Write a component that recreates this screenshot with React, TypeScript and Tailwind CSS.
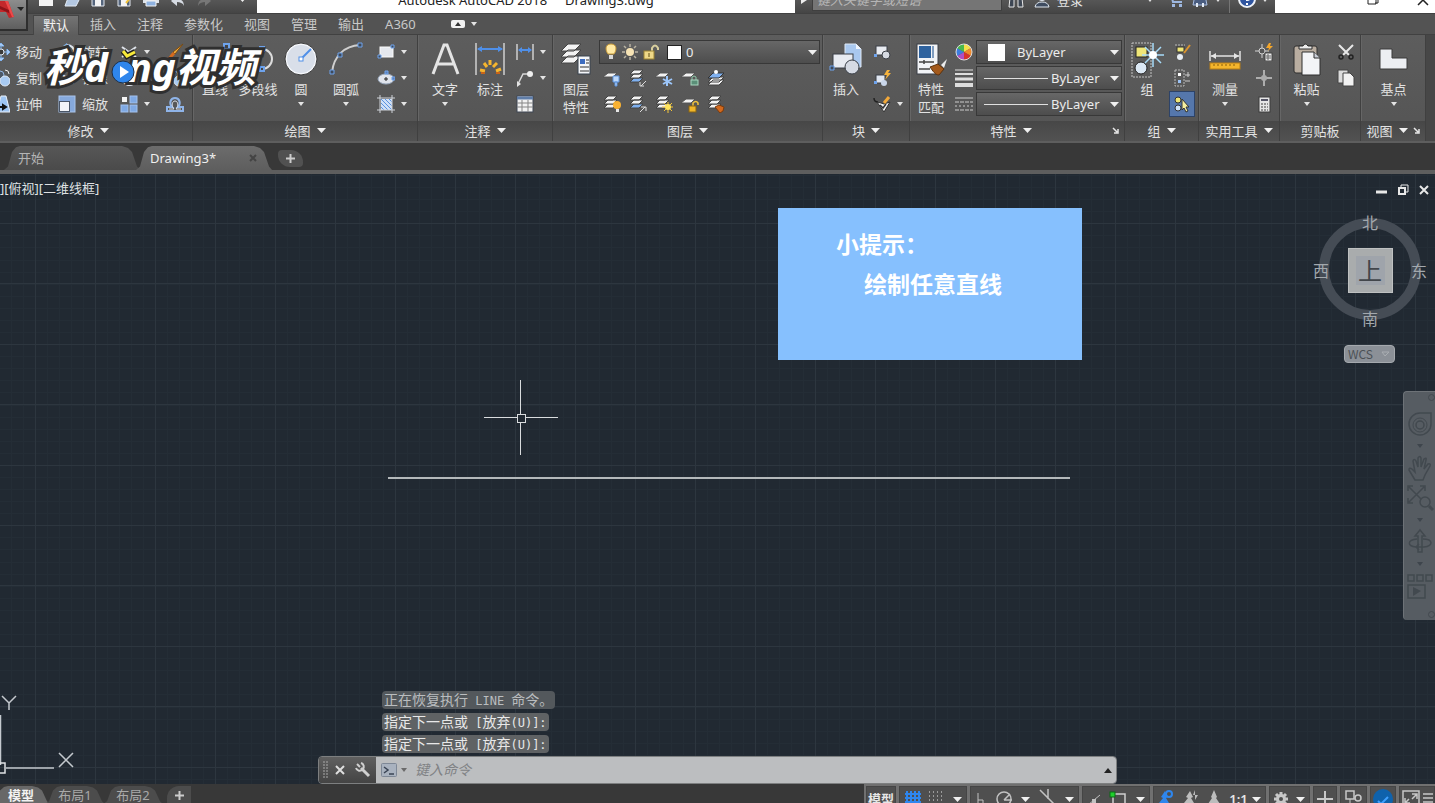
import type { ReactNode } from "react"

type IconProps = { w?: number; h?: number; children: ReactNode }

const Icon = ({ w = 18, h = 18, children }: IconProps) => (
  <svg width={w} height={h} viewBox={`0 0 ${w} ${h}`} fill="none" className="shrink-0" aria-hidden="true">
    {children}
  </svg>
)

const Caret = () => (
  <svg width="6" height="4" viewBox="0 0 6 4" className="shrink-0" aria-hidden="true">
    <path d="M0 0h6L3 4z" fill="#e4e4e4" />
  </svg>
)

const BigCaret = () => (
  <svg width="9" height="5" viewBox="0 0 9 5" className="shrink-0" aria-hidden="true">
    <path d="M0 0h9L4.500 5z" fill="#f0f0f0" />
  </svg>
)

/* ---------- icons: modify ---------- */

const MoveIcon = () => (
  <Icon>
    <path d="M9 1v16M1 9h16M9 0l-3 3h6zM9 18l-3-3h6zM0 9l3-3v6zM18 9l-3-3v6z" stroke="#7fb2ee" fill="#dfe9f6" />
    <circle cx="9" cy="9" r="3" fill="#3a3a3a" stroke="#e6edf7" />
  </Icon>
)

const CopyIcon = () => (
  <Icon>
    <circle cx="8" cy="6" r="4" fill="#4d5968" stroke="#93b6e3" />
    <circle cx="13" cy="12" r="5" fill="#a8caf2" stroke="#dfe9f6" />
    <path d="M13 1q4 0 4 4" stroke="#eee" />
  </Icon>
)

const StretchIcon = () => (
  <Icon>
    <path d="M9 1h5l4 16H5z" fill="#9dc4f2" stroke="#e8f0fa" />
    <path d="M6 12h5M11 10l3 2-3 2z" fill="#111" stroke="#111" strokeWidth="2" />
  </Icon>
)

const RotateIcon = () => (
  <Icon>
    <path d="M9 2a7 7 0 1 1-6 4" stroke="#e0e6ee" strokeWidth="2" />
    <path d="M9 0l-4 3 5 2z" fill="#7fb2ee" />
  </Icon>
)

const ScaleIcon = () => (
  <Icon>
    <rect x="1" y="1" width="16" height="16" fill="#86a9dc" stroke="#a9c4ea" />
    <rect x="1" y="6" width="11" height="11" fill="#4a5668" />
    <rect x="2" y="7" width="9" height="9" fill="#f2f4f8" />
  </Icon>
)

const TrimIcon = () => (
  <Icon>
    <path d="M2 4l14 10M16 4L2 14" stroke="#dfe3ea" strokeWidth="2" />
  </Icon>
)

const ArrayIcon = () => (
  <Icon>
    <rect x="2" y="2" width="5" height="5" fill="#f4f4f4" />
    <rect x="10" y="1" width="7" height="7" fill="#7fa9e4" stroke="#a3c2ee" />
    <rect x="1" y="10" width="7" height="7" fill="#7fa9e4" stroke="#a3c2ee" />
    <rect x="10" y="10" width="7" height="7" fill="#7fa9e4" stroke="#a3c2ee" />
  </Icon>
)

const BrushIcon = () => (
  <Icon>
    <path d="M17 1L7 9l2 2z" fill="#f5b03c" stroke="#7a4a12" />
    <path d="M7 9l2 2c-2 4-5 4-8 4 3-1 3-4 6-6z" fill="#d36a1e" />
  </Icon>
)

const OffsetIcon = () => (
  <Icon>
    <path d="M1 16h16v-4h-5c3-3 2-9-3-9s-6 6-3 9H1z" stroke="#8fb4e8" strokeWidth="2" />
    <path d="M3 14h5c-3-3-2-8 1-8s4 5 1 8h5" stroke="#d9dde4" />
  </Icon>
)

/* ---------- icons: draw ---------- */

const LineIcon = () => (
  <Icon w={34} h={34}>
    <path d="M6 29L28 5" stroke="#dcdcdc" strokeWidth="2" />
    <path d="M26 2h5v5h-5zM4 27h5v5H4z" fill="#444" stroke="#6ea3ec" strokeWidth="2" />
  </Icon>
)

const PolylineIcon = () => (
  <Icon w={34} h={34}>
    <path d="M5 27V7h16a10 10 0 0 1 0 20" stroke="#dcdcdc" strokeWidth="2" />
    <path d="M19 5h4v4h-4zM19 25h4v4h-4z" fill="#444" stroke="#6ea3ec" strokeWidth="2" />
  </Icon>
)

const CircleIcon = () => (
  <Icon w={34} h={34}>
    <circle cx="17" cy="17" r="15" fill="#d9dfe9" stroke="#f4f6fa" strokeWidth="2" />
    <circle cx="17" cy="17" r="16" stroke="#3c3c3c" />
    <path d="M17 17L27 7" stroke="#4f8fe8" strokeWidth="2" />
    <rect x="15" y="15" width="4" height="4" fill="#fff" stroke="#4f8fe8" />
  </Icon>
)

const ArcIcon = () => (
  <Icon w={34} h={34}>
    <path d="M3 30C5 14 15 4 31 3" stroke="#cfcfcf" strokeWidth="2" />
    <path d="M1 28h4v4H1zM9 11h4v4H9zM29 1h4v4h-4z" fill="#3f4a5a" stroke="#6ea3ec" />
  </Icon>
)

const RectIcon = () => (
  <Icon>
    <rect x="3" y="4" width="13" height="10" fill="#e5e8ee" stroke="#fafafa" />
    <path d="M14 2h3v3h-3zM1 12h3v3H1z" fill="#3f4a5a" stroke="#6ea3ec" />
  </Icon>
)

const EllipseIcon = () => (
  <Icon>
    <ellipse cx="9" cy="10" rx="8" ry="5" fill="#e0e4ec" stroke="#9aa9be" />
    <path d="M9 8v4M7 10h4" stroke="#222" />
    <path d="M8 2h3v3H8zM15 8h3v3h-3z" fill="#5a7fb8" stroke="#6ea3ec" />
  </Icon>
)

const HatchIcon = () => (
  <Icon>
    <rect x="4" y="4" width="11" height="11" fill="#cfe0f7" />
    <path d="M4 8l7 7M4 4l11 11M8 4l7 7M4 12l3 3M12 4l3 3" stroke="#5a92e0" />
    <path d="M3 0v18M15 0v18M0 3h18M0 15h18" stroke="#d0d4da" />
  </Icon>
)

/* ---------- icons: annotate ---------- */

const TextIcon = () => (
  <Icon w={34} h={34}>
    <path d="M5 32L16 3h3l11 29M10 22h15" stroke="#e4e4e4" strokeWidth="3" />
  </Icon>
)

const DimensionIcon = () => (
  <Icon w={34} h={34}>
    <path d="M3 1v32M31 1v32" stroke="#cfcfcf" strokeWidth="1.500" />
    <path d="M5 7h24" stroke="#4f8fe8" strokeWidth="2" />
    <path d="M4 7l5-3v6zM30 7l-5-3v6z" fill="#4f8fe8" />
    <path d="M7 28l5 1M11 21l3 4M17 18v5M24 21l-4 4M28 27l-5 2" stroke="#f5b52e" strokeWidth="3" />
    <path d="M8 31h4M23 31h4" stroke="#c8641a" strokeWidth="2" />
  </Icon>
)

const LinearDimIcon = () => (
  <Icon>
    <path d="M1 1v16M17 1v16" stroke="#cfcfcf" strokeWidth="1.500" />
    <path d="M3 7h12" stroke="#4f8fe8" strokeWidth="2" />
    <path d="M2 7l4-3v6zM16 7l-4-3v6z" fill="#4f8fe8" />
  </Icon>
)

const LeaderIcon = () => (
  <Icon>
    <path d="M2 15L7 5h5" stroke="#d8d8d8" strokeWidth="1.500" />
    <path d="M1 18l0-6 4 3z" fill="#e4e4e4" />
    <circle cx="14" cy="5" r="3" fill="#efefef" />
  </Icon>
)

const TableIcon = () => (
  <Icon>
    <rect x="1" y="1" width="16" height="16" fill="#f2f2f2" stroke="#3e4754" />
    <path d="M1 3h16" stroke="#5f7da8" strokeWidth="3" />
    <path d="M1 8h16M1 12h16M6 5v12M12 5v12" stroke="#858585" />
  </Icon>
)

/* ---------- icons: layers ---------- */

const LayerPropsIcon = () => (
  <Icon w={34} h={34}>
    <path d="M9 14h13l-7 7H2zM9 8h13l-7 7H2zM9 2h13l-7 7H2z" fill="#f3f3f3" stroke="#444" />
    <rect x="19" y="14" width="12" height="18" fill="#f4f6f9" stroke="#39424e" />
    <rect x="21" y="17" width="5" height="5" fill="#3c6cc0" />
    <path d="M27 18h3M27 21h3M21 25h9M21 29h9" stroke="#333" />
  </Icon>
)

// small layer stack with a coloured badge in the lower right corner
const StackIcon = ({ full = false, blue = false, badge }: { full?: boolean; blue?: boolean; badge: ReactNode }) => (
  <Icon>
    {full ? (
      <>
        <path d="M5 9h9l-4 4H1z" fill={blue ? "#7fb0ef" : "#f3f3f3"} stroke="#444" />
        <path d="M5 5h9l-4 4H1zM5 1h9l-4 4H1z" fill="#f3f3f3" stroke="#444" />
      </>
    ) : (
      <path d="M5 4h9l-4 4H0z" fill="#f3f3f3" stroke="#555" />
    )}
    {badge}
  </Icon>
)

const layerTools: { label: string; icon: ReactNode }[] = [
  { label: "关", icon: <StackIcon badge={<path d="M10 7h6v6h-6zM12 13h2v4h-2z" fill="#bcd8fa" stroke="#5d93dc" />} /> },
  { label: "隔离", icon: <StackIcon full blue badge={<path d="M17 12l-5 5M11 13v4h4" stroke="#ddd" />} /> },
  {
    label: "冻结",
    icon: <StackIcon badge={<path d="M12 7v10M8 10l9 5M8 15l9-5" stroke="#9cc6fa" strokeWidth="2" />} />,
  },
  {
    label: "锁定",
    icon: (
      <StackIcon
        badge={
          <>
            <path d="M11 11V8q2-2 4 0v3" stroke="#8ec7a8" />
            <rect x="10" y="11" width="7" height="5" fill="#5b8f78" stroke="#a9d7c0" />
          </>
        }
      />
    ),
  },
  {
    label: "置为当前",
    icon: (
      <Icon>
        <path d="M6 11h11l-5 5H1zM6 8h11l-5 5H1z" fill="#f3f3f3" stroke="#444" />
        <path d="M6 4h11l-5 5H1z" fill="#7fb0ef" stroke="#333" />
        <circle cx="9" cy="3" r="2" fill="#fff" />
      </Icon>
    ),
  },
  {
    label: "打开所有图层",
    icon: (
      <StackIcon
        full
        badge={
          <>
            <circle cx="14" cy="10" r="4" fill="#f9b233" />
            <path d="M13 14h3v3h-3z" fill="#e6e6e6" />
          </>
        }
      />
    ),
  },
  { label: "取消隔离", icon: <StackIcon full blue badge={<path d="M11 17l5-5M12 12h5v4" stroke="#ddd" />} /> },
  {
    label: "解冻所有图层",
    icon: (
      <StackIcon
        full
        badge={
          <>
            <path d="M13 7v11M7 12h11M9 8l8 8M17 8l-8 8" stroke="#f3c53a" />
            <circle cx="13" cy="12" r="3" fill="#ffe45c" />
          </>
        }
      />
    ),
  },
  {
    label: "解锁",
    icon: (
      <StackIcon
        badge={
          <>
            <path d="M12 11V8q3-3 5 0v2" stroke="#f2c33c" strokeWidth="1.500" />
            <rect x="8" y="11" width="7" height="6" fill="#f0b62a" stroke="#8a6412" />
          </>
        }
      />
    ),
  },
  {
    label: "图层匹配",
    icon: <StackIcon full badge={<path d="M8 12l4-2 5 2-1 4-3 2z" fill="#d2691e" stroke="#7a3b0c" />} />,
  },
]

const BulbIcon = () => (
  <Icon w={12} h={18}>
    <path d="M6 1c6 0 6 6 3 10H3C0 7 0 1 6 1z" fill="#ffe9a3" stroke="#c79a3a" />
    <rect x="4" y="12" width="4" height="4" fill="#d8d8d8" />
  </Icon>
)

const SunIcon = () => (
  <Icon>
    <path
      d="M9 1v3M9 14v3M1 9h3M14 9h3M3 3l2 2M13 13l2 2M15 3l-2 2M3 15l2-2"
      stroke="#b9b3a2"
      strokeWidth="1.500"
    />
    <circle cx="9" cy="9" r="4" fill="#f6e3b4" />
  </Icon>
)

const UnlockIcon = () => (
  <Icon w={16}>
    <path d="M9 9V5q3-5 6 0v2" stroke="#d9cf9e" strokeWidth="2" />
    <rect x="1" y="8" width="10" height="8" fill="#efd988" stroke="#9c8333" />
    <path d="M6 10v4" stroke="#5f4c12" />
  </Icon>
)

/* ---------- icons: block / properties ---------- */

const InsertIcon = () => (
  <Icon w={34} h={34}>
    <path d="M16 2h11l5 5v18H16z" fill="#a9c8ef" stroke="#dfe9f6" />
    <path d="M27 2v5h5z" fill="#eef4fc" />
    <rect x="4" y="12" width="20" height="14" fill="#e8ebf1" stroke="#3a3f47" />
    <circle cx="23" cy="25" r="7" fill="#d5dae3" stroke="#3a3f47" />
    <path d="M1 24h4v4H1z" fill="#3f4a5a" stroke="#6ea3ec" />
  </Icon>
)

const CreateBlockIcon = () => (
  <Icon>
    <rect x="3" y="3" width="11" height="9" fill="#e8ebf1" stroke="#3a3f47" />
    <circle cx="13" cy="12" r="4" fill="#d5dae3" stroke="#3a3f47" />
    <path d="M1 11h3v3H1z" fill="#6ea3ec" />
  </Icon>
)

const EditBlockIcon = () => (
  <Icon>
    <rect x="3" y="6" width="9" height="8" fill="#dfe6f1" stroke="#3a3f47" />
    <circle cx="11" cy="14" r="3" fill="#c9d6ea" />
    <path d="M1 12h3v3H1z" fill="#6ea3ec" />
    <path d="M14 1l-3 5h3l-2 5 6-7h-3l2-3z" fill="#f6b33c" />
  </Icon>
)

const AttributeIcon = () => (
  <Icon>
    <path d="M1 3q0 4 4 4" stroke="#222" strokeWidth="1.500" />
    <path d="M4 7l4 1 3 1 6-2-6 10z" fill="#eee" stroke="#333" />
    <path d="M7 10l3 3 3-4" stroke="#333" strokeWidth="1.500" />
    <path d="M16 2l-5 6" stroke="#f2a93a" strokeWidth="3" />
  </Icon>
)

const MatchPropsIcon = () => (
  <Icon w={34} h={34}>
    <rect x="3" y="2" width="21" height="30" fill="#f2f4f7" stroke="#3a3f47" />
    <rect x="5" y="4" width="12" height="12" fill="#2f639f" />
    <path d="M19 4v12" stroke="#7f9cbf" strokeWidth="2" />
    <path d="M5 20h15M10 18v4M5 27h11" stroke="#444" strokeWidth="1.500" />
    <path d="M33 17l-6 6 3 3z" fill="#ececec" />
    <path d="M16 25l8-3 6 5-5 6c-4 0-6-4-9-8z" fill="#a35a1c" stroke="#5d320c" />
  </Icon>
)

const ColorWheelIcon = () => (
  <Icon>
    <path d="M9 9V1a8 8 0 0 1 7 4z" fill="#f4e04a" />
    <path d="M9 9l7-4a8 8 0 0 1 0 8z" fill="#f08a2c" />
    <path d="M9 9l7 4a8 8 0 0 1-7 4z" fill="#d8332c" />
    <path d="M9 9v8a8 8 0 0 1-7-4z" fill="#b04fc4" />
    <path d="M9 9l-7 4a8 8 0 0 1 0-8z" fill="#3c7de0" />
    <path d="M9 9L2 5a8 8 0 0 1 7-4z" fill="#49b84c" />
    <circle cx="9" cy="9" r="8" stroke="#ddd" />
  </Icon>
)

const LineWeightIcon = () => (
  <Icon>
    <path d="M0 1h18" stroke="#ddd" />
    <path d="M0 5h18" stroke="#ddd" strokeWidth="2" />
    <path d="M0 10h18" stroke="#ddd" strokeWidth="3" />
    <path d="M0 16h18" stroke="#ddd" strokeWidth="4" />
  </Icon>
)

const LineTypeIcon = () => (
  <Icon>
    <path d="M0 3h18" stroke="#ccc" />
    <path d="M0 7h18M0 15h18" stroke="#ccc" strokeDasharray="4 1" />
    <path d="M0 11h18" stroke="#ccc" strokeDasharray="2 2" />
  </Icon>
)

/* ---------- icons: group / utilities / clipboard / view ---------- */

const GroupIcon = () => (
  <Icon w={36} h={36}>
    <rect x="3" y="1" width="19" height="34" stroke="#c4c4c4" strokeDasharray="2 1" />
    <rect x="7" y="5" width="11" height="10" fill="#efe678" stroke="#222" />
    <circle cx="12" cy="26" r="6" fill="#dbe8f4" stroke="#222" />
    <path d="M24 1v24M13 13h22M16 5l16 16M32 5L16 21" stroke="#a7dcfa" strokeWidth="1.500" />
    <circle cx="24" cy="13" r="4" fill="#fff" />
  </Icon>
)

const UngroupIcon = () => (
  <Icon>
    <path d="M2 2h10" stroke="#bbb" strokeDasharray="2 1" />
    <rect x="4" y="4" width="7" height="5" fill="#efe678" stroke="#333" />
    <circle cx="7" cy="14" r="3" fill="#e8eef5" />
    <path d="M17 2l-6 8" stroke="#d9922f" strokeWidth="2" />
  </Icon>
)

const GroupEditIcon = () => (
  <Icon>
    <rect x="2" y="1" width="9" height="16" stroke="#bbb" strokeDasharray="2 1" />
    <rect x="5" y="4" width="3" height="3" fill="#fff" />
    <rect x="5" y="11" width="3" height="3" fill="#9cc2f5" />
    <path d="M12 6h5M15 3v5M12 12h5" stroke="#ccc" />
  </Icon>
)

const GroupSelectIcon = () => (
  <Icon>
    <circle cx="5" cy="5" r="3" fill="#efe678" stroke="#333" />
    <circle cx="5" cy="13" r="3" fill="#cfe1f8" stroke="#333" />
    <path d="M9 4l7 8h-3l2 4-2 1-2-4-2 2z" fill="#f6efa0" stroke="#333" />
  </Icon>
)

const MeasureIcon = () => (
  <Icon w={34} h={34}>
    <path d="M2 9v10M32 9v10M3 14h28" stroke="#e4e4e4" strokeWidth="1.500" />
    <path d="M3 14l5-3v6zM31 14l-5-3v6z" fill="#e4e4e4" />
    <rect x="2" y="21" width="30" height="6" fill="#f4b52c" stroke="#b97f14" />
    <path d="M6 22v2M10 22v2M14 22v2M18 22v2M22 22v2M26 22v2" stroke="#8a5e0a" />
  </Icon>
)

const QuickSelectIcon = () => (
  <Icon>
    <path d="M7 1v14M0 8h14" stroke="#d4d4d4" />
    <circle cx="7" cy="8" r="3" fill="#555" stroke="#d4d4d4" />
    <path d="M14 0l-3 5h3l-1 3 5-5h-3l1-3z" fill="#f4a62a" />
    <rect x="10" y="10" width="7" height="8" fill="#eee" stroke="#444" />
    <path d="M11 13h5M11 15h5M13 11v6" stroke="#666" />
  </Icon>
)

const PointIcon = () => (
  <Icon>
    <path d="M9 1v16M1 9h16" stroke="#c9c9c9" strokeWidth="1.500" />
    <circle cx="9" cy="9" r="3" fill="#aaa" />
  </Icon>
)

const CalculatorIcon = () => (
  <Icon>
    <rect x="4" y="2" width="11" height="15" fill="#e6e6e6" stroke="#3d3d3d" />
    <path d="M6 5h7" stroke="#556" strokeWidth="2" />
    <path d="M6 9h7M6 12h7M6 15h7" stroke="#777" strokeDasharray="2 1" strokeWidth="1.500" />
  </Icon>
)

const PasteIcon = () => (
  <Icon w={34} h={34}>
    <rect x="4" y="4" width="23" height="27" rx="2" fill="#b9ada0" stroke="#2f2f2f" />
    <path d="M9 7V4h4q2-4 5 0h4v3z" fill="#ececec" stroke="#2f2f2f" />
    <path d="M12 10h12l6 6v17H12z" fill="#f3f4f7" stroke="#2f2f2f" />
    <path d="M24 10v6h6" fill="#c9cdd6" stroke="#2f2f2f" />
  </Icon>
)

const CutIcon = () => (
  <Icon>
    <path d="M2 2l10 10M16 2L6 12" stroke="#e8e8e8" strokeWidth="2" />
    <circle cx="4" cy="14" r="2" stroke="#222" strokeWidth="1.500" />
    <circle cx="14" cy="14" r="2" stroke="#222" strokeWidth="1.500" />
  </Icon>
)

const CopyClipIcon = () => (
  <Icon>
    <path d="M1 1h10v13H1z" fill="#dcdcdc" stroke="#444" />
    <path d="M6 4h7l4 4v9H6z" fill="#f2f2f2" stroke="#444" />
  </Icon>
)

const BaseViewIcon = () => (
  <Icon w={34} h={34}>
    <path d="M3 7h12v9h15v11H3z" fill="#eceef2" stroke="#3a3a3a" />
  </Icon>
)

/* ---------- ribbon parts ---------- */

type BigButtonProps = { icon: ReactNode; label: string; label2?: string; menu?: boolean; width: string }

const BigButton = ({ icon, label, label2, menu, width }: BigButtonProps) => (
  <button className={`${width} shrink-0 flex flex-col items-center pt-[3px] whitespace-nowrap`}>
    <span className="h-[38px] flex items-start">{icon}</span>
    <span className="leading-[18px]">{label}</span>
    {label2 && <span className="leading-[18px]">{label2}</span>}
    {menu && (
      <span className="pt-1">
        <Caret />
      </span>
    )}
  </button>
)

type SmallButtonProps = { icon: ReactNode; title: string; text?: string; menu?: boolean; active?: boolean }

const SmallButton = ({ icon, title, text, menu, active }: SmallButtonProps) => (
  <button
    title={title}
    className={`h-[26px] px-1 flex items-center gap-[6px] whitespace-nowrap ${
      active ? "bg-[#5577ac] shadow-[inset_0_0_0_1px_#2d4368]" : ""
    }`}
  >
    {icon}
    {text && <span>{text}</span>}
    {menu && <Caret />}
  </button>
)

const Launcher = ({ label }: { label: string }) => (
  <button aria-label={label} className="w-[12px] flex items-center">
    <Icon w={7} h={7}>
      <path d="M1 1l4 4M6 2v4H2" stroke="#e8e8e8" strokeWidth="1.500" />
    </Icon>
  </button>
)

type PanelProps = {
  title: string
  width: string
  menu?: boolean
  launcher?: boolean
  titleClass?: string
  children: ReactNode
}

const Panel = ({ title, width, menu = true, launcher, titleClass = "", children }: PanelProps) => (
  <section className={`${width} shrink-0 flex flex-col border-r border-[#404040] shadow-[1px_0_0_#666]`}>
    <div className="h-[86px] pt-1 flex">{children}</div>
    <div className="h-[20px] pb-px flex bg-linear-to-b from-[#474747] to-[#525252]">
      <button className={`flex-1 flex items-center justify-center gap-[6px] whitespace-nowrap ${titleClass}`}>
        {title}
        {menu && <BigCaret />}
      </button>
      {launcher && <Launcher label={`${title}设置`} />}
    </div>
  </section>
)

const Column = ({ children, className = "" }: { children: ReactNode; className?: string }) => (
  <div className={`shrink-0 flex flex-col ${className}`}>{children}</div>
)

const SelectArrow = () => (
  <span className="absolute inset-y-0 right-[3px] flex items-center pointer-events-none">
    <BigCaret />
  </span>
)

const selectClass =
  "w-full h-[24px] appearance-none bg-linear-to-b from-[#676767] to-[#4d4d4d] border border-[#383838] text-[13px] text-[#ececec]"

const Ribbon = () => (
  <div className="h-[106px] shrink-0 flex bg-linear-to-b from-[#5d5d5d] to-[#545454]">
    <Panel title="修改" width="w-[193px]" titleClass="pr-4">
      <Column className="-ml-3">
        <SmallButton icon={<MoveIcon />} title="移动" text="移动" />
        <SmallButton icon={<CopyIcon />} title="复制" text="复制" />
        <SmallButton icon={<StretchIcon />} title="拉伸" text="拉伸" />
      </Column>
      <Column className="ml-2">
        <SmallButton icon={<RotateIcon />} title="旋转" text="旋转" />
        <SmallButton icon={<TrimIcon />} title="镜像" text="镜像" />
        <SmallButton icon={<ScaleIcon />} title="缩放" text="缩放" />
      </Column>
      <Column className="ml-1">
        <SmallButton icon={<TrimIcon />} title="修剪" menu />
        <SmallButton icon={<RotateIcon />} title="圆角" menu />
        <SmallButton icon={<ArrayIcon />} title="阵列" menu />
      </Column>
      <Column className="ml-2">
        <SmallButton icon={<BrushIcon />} title="删除" />
        <SmallButton icon={<CopyIcon />} title="分解" />
        <SmallButton icon={<OffsetIcon />} title="偏移" />
      </Column>
    </Panel>

    <Panel title="绘图" width="w-[225px]">
      <BigButton icon={<LineIcon />} label="直线" width="w-[44px]" />
      <BigButton icon={<PolylineIcon />} label="多段线" width="w-[42px]" />
      <BigButton icon={<CircleIcon />} label="圆" menu width="w-[44px]" />
      <BigButton icon={<ArcIcon />} label="圆弧" menu width="w-[46px]" />
      <Column className="ml-1">
        <SmallButton icon={<RectIcon />} title="矩形" menu />
        <SmallButton icon={<EllipseIcon />} title="椭圆" menu />
        <SmallButton icon={<HatchIcon />} title="图案填充" menu />
      </Column>
    </Panel>

    <Panel title="注释" width="w-[135px]">
      <BigButton icon={<TextIcon />} label="文字" menu width="w-[54px]" />
      <BigButton icon={<DimensionIcon />} label="标注" width="w-[36px]" />
      <Column className="ml-1">
        <SmallButton icon={<LinearDimIcon />} title="线性" menu />
        <SmallButton icon={<LeaderIcon />} title="引线" menu />
        <SmallButton icon={<TableIcon />} title="表格" />
      </Column>
    </Panel>

    <Panel title="图层" width="w-[270px]">
      <BigButton icon={<LayerPropsIcon />} label="图层" label2="特性" width="w-[46px]" />
      <div className="flex-1 pr-[2px]">
        <div className="relative h-[26px] flex items-center">
          <select aria-label="图层" className={`${selectClass} pl-[86px]`}>
            <option>0</option>
          </select>
          <span className="absolute inset-y-0 left-[6px] flex items-center gap-1 pointer-events-none">
            <BulbIcon />
            <SunIcon />
            <UnlockIcon />
            <span className="ml-1 w-[15px] h-[15px] bg-white border border-[#222]" />
          </span>
          <SelectArrow />
        </div>
        <div className="w-[130px] grid grid-cols-5">
          {layerTools.map((tool) => (
            <SmallButton key={tool.label} icon={tool.icon} title={tool.label} />
          ))}
        </div>
      </div>
    </Panel>

    <Panel title="块" width="w-[87px]">
      <BigButton icon={<InsertIcon />} label="插入" width="w-[46px]" />
      <Column>
        <SmallButton icon={<CreateBlockIcon />} title="创建块" />
        <SmallButton icon={<EditBlockIcon />} title="编辑块" />
        <SmallButton icon={<AttributeIcon />} title="编辑属性" menu />
      </Column>
    </Panel>

    <Panel title="特性" width="w-[215px]" launcher>
      <BigButton icon={<MatchPropsIcon />} label="特性" label2="匹配" width="w-[42px]" />
      <Column className="w-[24px] items-center">
        <SmallButton icon={<ColorWheelIcon />} title="颜色" />
        <SmallButton icon={<LineWeightIcon />} title="线宽" />
        <SmallButton icon={<LineTypeIcon />} title="线型" />
      </Column>
      <div className="flex-1 pr-[2px]">
        <div className="relative h-[26px] flex items-center">
          <select aria-label="对象颜色" className={`${selectClass} pl-[40px]`}>
            <option>ByLayer</option>
          </select>
          <span className="absolute left-3 w-[17px] h-[17px] bg-white pointer-events-none" />
          <SelectArrow />
        </div>
        {["线宽", "线型"].map((name) => (
          <div key={name} className="relative h-[26px] flex items-center">
            <select aria-label={`${name}选择`} className={`${selectClass} pl-[74px]`}>
              <option>ByLayer</option>
            </select>
            <span className="absolute left-2 w-[64px] h-px bg-[#e0e0e0] pointer-events-none" />
            <SelectArrow />
          </div>
        ))}
      </div>
    </Panel>

    <Panel title="组" width="w-[74px]">
      <BigButton icon={<GroupIcon />} label="组" width="w-[44px]" />
      <Column>
        <SmallButton icon={<UngroupIcon />} title="解除编组" />
        <SmallButton icon={<GroupEditIcon />} title="组编辑" />
        <SmallButton icon={<GroupSelectIcon />} title="启用组选择" active />
      </Column>
    </Panel>

    <Panel title="实用工具" width="w-[81px]">
      <BigButton icon={<MeasureIcon />} label="测量" menu width="w-[52px]" />
      <Column>
        <SmallButton icon={<QuickSelectIcon />} title="快速选择" />
        <SmallButton icon={<PointIcon />} title="点坐标" />
        <SmallButton icon={<CalculatorIcon />} title="计算器" />
      </Column>
    </Panel>

    <Panel title="剪贴板" width="w-[81px]" menu={false}>
      <BigButton icon={<PasteIcon />} label="粘贴" menu width="w-[53px]" />
      <Column>
        <SmallButton icon={<CutIcon />} title="剪切" />
        <SmallButton icon={<CopyClipIcon />} title="复制剪裁" />
      </Column>
    </Panel>

    <Panel title="视图" width="w-[65px]" launcher>
      <BigButton icon={<BaseViewIcon />} label="基点" menu width="w-[65px]" />
    </Panel>
    <div className="flex-1 bg-[#474747]" />
  </div>
)

/* ---------- title bar ---------- */

const TitleBar = () => (
  <header className="h-[13px] shrink-0 overflow-hidden flex items-end bg-white text-[13px] whitespace-nowrap">
    <div className="w-[257px] h-[27px] shrink-0 pl-[38px] flex items-center gap-[10px] bg-linear-to-b from-[#6a6a6a] to-[#454545]">
      <Icon w={16} h={16}>
        <rect x="1" y="0" width="14" height="14" fill="#f4f4f4" />
      </Icon>
      <Icon w={16} h={16}>
        <path d="M1 14L4 6h12l-4 8z" fill="#b4c8e2" stroke="#e3ebf5" />
      </Icon>
      <Icon w={16} h={16}>
        <path d="M2 1h12v13H2z" fill="#55657c" stroke="#e3e8ef" />
        <rect x="5" y="8" width="6" height="6" fill="#f4f4f4" />
      </Icon>
      <Icon w={16} h={16}>
        <path d="M2 1h12v13H2z" fill="#55657c" stroke="#e3e8ef" />
        <path d="M5 8h6v6H5z" fill="#f4f4f4" />
        <path d="M15 5l-5 6" stroke="#f2c33c" strokeWidth="2" />
      </Icon>
      <Icon w={18} h={16}>
        <path d="M1 5h16v6H1z" fill="#dfe4ea" />
        <path d="M4 9h10v5H4z" fill="#8fb2e0" stroke="#f4f4f4" />
      </Icon>
      <Icon w={16} h={16}>
        <path d="M1 9l6-6v4c5 0 7 3 7 7-1-3-4-4-7-4v4z" fill="#d6dbe3" />
      </Icon>
      <Icon w={16} h={16}>
        <path d="M15 9L9 3v4c-5 0-7 3-7 7 1-3 4-4 7-4v4z" fill="#777" />
      </Icon>
      <span className="ml-4">
        <BigCaret />
      </span>
    </div>
    <h1 className="h-[27px] flex-1 flex items-center justify-center gap-[18px] text-[#222]">
      <span>Autodesk AutoCAD 2018</span>
      <span>Drawing3.dwg</span>
    </h1>
    <div className="w-[480px] h-[27px] shrink-0 flex items-center bg-linear-to-b from-[#6a6a6a] to-[#454545] text-[#e6e6e6]">
      <span className="w-[17px] shrink-0 flex justify-center">
        <Icon w={6} h={8}>
          <path d="M0 0l6 4-6 4z" fill="#eee" />
        </Icon>
      </span>
      <input
        aria-label="搜索"
        placeholder="键入关键字或短语"
        className="w-[190px] shrink-0 h-[23px] px-1 bg-[#757575] border border-[#3f3f3f] italic placeholder:text-[#b5b5b5]"
      />
      <button aria-label="查找" className="ml-[5px]">
        <Icon w={18} h={16}>
          <path d="M2 15l1-9 4-3v12zM16 15l-1-9-4-3v12z" fill="#3d4653" stroke="#e6e6e6" />
        </Icon>
      </button>
      <button className="ml-2 flex items-center gap-[6px]">
        <Icon w={18} h={16}>
          <circle cx="9" cy="5" r="4" fill="#dfe6ef" />
          <path d="M2 15q1-5 7-5t7 5z" fill="#3f4c60" stroke="#dfe6ef" />
        </Icon>
        登录
      </button>
      <span className="ml-[64px]">
        <Caret />
      </span>
      <button aria-label="应用商店" className="ml-[14px]">
        <Icon w={18} h={16}>
          <path d="M1 2h3l2 8h9" stroke="#9db7e0" strokeWidth="2" />
          <path d="M5 12h3v3H5zM12 12h3v3h-3z" fill="#9db7e0" />
        </Icon>
      </button>
      <button aria-label="保持连接" className="ml-[6px] flex items-center gap-[6px]">
        <Icon w={18} h={16}>
          <path d="M4 3h10l2 10H2z" fill="#4a5d80" stroke="#a8bde0" />
          <path d="M6 15v-4M12 15v-4" stroke="#e3ebf5" strokeWidth="2" />
        </Icon>
        <Caret />
      </button>
      <span className="w-px h-full ml-2 bg-[#757575]" />
      <button aria-label="帮助" className="ml-2 flex items-center gap-[6px]">
        <Icon w={18} h={18}>
          <circle cx="9" cy="8" r="8" fill="#2f55a0" stroke="#eef2f8" strokeWidth="2" />
          <path d="M6 6q0-3 3-3t3 3-3 3v1M9 12v2" stroke="#fff" strokeWidth="2" />
        </Icon>
        <Caret />
      </button>
    </div>
    <div className="w-[160px] h-[27px] shrink-0 flex items-center justify-end gap-9 pr-[6px]">
      <button aria-label="向下还原">
        <Icon w={14} h={10}>
          <path d="M3 0h8v8h-3M3 2h6v7H1V2z" stroke="#222" />
        </Icon>
      </button>
      <button aria-label="关闭">
        <Icon w={12} h={12}>
          <path d="M1 1l10 10M11 1L1 11" stroke="#222" strokeWidth="1.500" />
        </Icon>
      </button>
    </div>
  </header>
)

const menuTabs = ["插入", "注释", "参数化", "视图", "管理", "输出", "A360"]

const RibbonTabs = () => (
  <nav className="h-[22px] shrink-0 pl-[33px] flex items-end gap-px bg-[#535353] border-y border-[#414141] text-[#c9c9c9]">
    <button className="h-[20px] px-[9px] leading-[17px] -mb-px bg-linear-to-b from-[#747474] to-[#5d5d5d] text-[#f2f2f2] border-x border-t border-[#454545]">
      默认
    </button>
    {menuTabs.map((tab) => (
      <button key={tab} className="h-[20px] px-[10px]">
        {tab}
      </button>
    ))}
    <button aria-label="最小化功能区" className="h-[20px] ml-6 flex items-center gap-[6px]">
      <Icon w={14} h={8}>
        <rect width="14" height="8" rx="2" fill="#f2f2f2" />
        <path d="M4 6h6L7 2z" fill="#333" />
      </Icon>
      <Caret />
    </button>
  </nav>
)

const tabShape =
  "[clip-path:polygon(0_100%,4px_85%,8px_25%,12px_5%,16px_0,calc(100%-18px)_0,calc(100%-12px)_8%,calc(100%-8px)_25%,calc(100%-3px)_85%,100%_100%)]"

const DocumentTabs = () => (
  <div className="h-[33px] shrink-0 pl-1 flex items-end bg-[#383838] border-t-2 border-b-4 border-[#5e5e5e]">
    <button className={`${tabShape} w-[136px] h-[24px] pl-[14px] text-left bg-linear-to-b from-[#575757] to-[#4a4a4a] text-[#b5b5b5]`}>
      开始
    </button>
    <div className={`${tabShape} w-[136px] h-[24px] -ml-1 pl-[14px] pr-[15px] flex items-center justify-between bg-linear-to-b from-[#6c6c6c] to-[#5e5e5e] text-[#f0f0f0]`}>
      <button>Drawing3*</button>
      <button aria-label="关闭图形">
        <Icon w={8} h={8}>
          <path d="M1 1l6 6M7 1L1 7" stroke="#444" strokeWidth="2" />
        </Icon>
      </button>
    </div>
    <button aria-label="新图形" className="w-[25px] h-[17px] mb-[3px] ml-[6px] flex items-center justify-center bg-[#515151] rounded-tr-xl rounded-bl-xl rounded-sm">
      <Icon w={9} h={9}>
        <path d="M4.500 0v9M0 4.500h9" stroke="#ccc" strokeWidth="2" />
      </Icon>
    </button>
  </div>
)

/* ---------- drawing area ---------- */

const range = (n: number) => Array.from({ length: n }, (_, i) => i)
const majorX = range(60).map((i) => 35 + i * 60)
const majorY = range(40).map((i) => Math.round(49 + i * 60.4))
const minorX = range(300).map((i) => -1 + i * 12)
const minorY = range(200).map((i) => Math.round(1 + i * 12.08))

const GridLines = () => (
  <svg className="absolute inset-0 w-full h-full" aria-hidden="true" shapeRendering="crispEdges">
    <path d={minorX.map((x) => `M${x}.5 0v2400`).join("") + minorY.map((y) => `M0 ${y}.5h3600`).join("")} stroke="#242d36" />
    <path d={majorX.map((x) => `M${x}.5 0v2400`).join("") + majorY.map((y) => `M0 ${y}.5h3600`).join("")} stroke="#2d363f" />
    <path d="M388 304h682" stroke="#b4b9bb" strokeWidth="2" />
    <path d="M484 243.500h33M525 243.500h33M520.500 206v34M520.500 248v33M517 240h8v8h-8z" fill="none" stroke="#d9dcde" />
  </svg>
)

const UcsIcon = () => (
  <svg width="80" height="90" viewBox="0 0 80 90" fill="none" className="absolute left-0 bottom-[2px]" aria-hidden="true">
    <path d="M2 4l7 7 7-7M9 11v7" stroke="#c4c9ce" strokeWidth="1.500" />
    <path d="M0.500 23v50M6 76h48" stroke="#c4c9ce" strokeWidth="1.500" />
    <rect x="-4" y="71" width="9" height="10" stroke="#dfe2e5" strokeWidth="1.500" />
    <path d="M59 61l14 14M73 61L59 75" stroke="#c4c9ce" strokeWidth="1.500" />
  </svg>
)

const ViewCube = () => (
  <div className="absolute top-[38px] right-2 w-[114px] flex flex-col items-center font-['Noto_Sans_CJK_SC',sans-serif] text-base leading-5 text-[#a3a8ad]">
    <div className="relative w-full h-[116px] flex flex-col items-center justify-between">
      <div className="absolute inset-x-[6px] top-[6px] h-[102px] rounded-full border-10 border-[#454c55]" />
      <button className="relative">北</button>
      <div className="relative w-full flex items-center justify-between">
        <button>西</button>
        <button className="w-[45px] h-[45px] p-2 bg-[#a9acad] shadow-[inset_0_0_0_1px_#bfc1c1]">
          <span className="block w-full h-full bg-[#9fa4ab] text-[24px] leading-[28px] text-[#42464b]">上</span>
        </button>
        <button>东</button>
      </div>
      <button className="relative">南</button>
    </div>
    <button className="w-[51px] h-[18px] mt-[17px] mr-[2px] flex items-center justify-center gap-2 rounded-sm bg-[#8b9097] border border-[#a5a9ae] text-xs text-[#4b5056]">
      WCS
      <Icon w={9} h={6}>
        <path d="M1 1h7L4 5z" stroke="#a9adb2" />
      </Icon>
    </button>
  </div>
)

const NavDot = () => (
  <Icon w={6} h={4}>
    <path d="M0 0h6L3 4z" fill="#3e454c" />
  </Icon>
)

const NavigationBar = () => (
  <div className="absolute right-0 top-[217px] w-[32px] h-[229px] rounded-l-sm bg-[#565c62] border-l border-t border-[#6d7277] flex flex-col items-center pt-[18px]">
    <span className="absolute right-0 top-[2px] w-[7px] h-[7px] rounded-full border border-[#43494f]" />
    <button aria-label="控制盘">
      <Icon w={26} h={28}>
        <path d="M13 3h11v11A11 11 0 1 1 13 3z" stroke="#42494f" strokeWidth="1.500" />
        <circle cx="13" cy="15" r="7" stroke="#42494f" />
        <circle cx="13" cy="15" r="4" stroke="#42494f" strokeWidth="1.500" />
      </Icon>
    </button>
    <span className="h-[16px] flex items-center">
      <NavDot />
    </span>
    <button aria-label="平移">
      <Icon w={26} h={30}>
        <path
          d="M8 26L2 16q0-3 3-1l3 3L6 7q1-3 3 0l2 6V4q2-3 3 0v9l3-8q3-2 2 1l-2 9 4-5q3-1 2 2l-5 9-2 5z"
          stroke="#42494f"
          strokeWidth="1.500"
        />
      </Icon>
    </button>
    <button aria-label="范围缩放">
      <Icon w={28} h={28}>
        <path d="M3 3l15 15M18 3L3 18M2 7V2h5M14 2h5v5M2 14v5h5" stroke="#42494f" strokeWidth="1.500" />
        <circle cx="19" cy="18" r="5" fill="#565c62" stroke="#42494f" strokeWidth="1.500" />
        <path d="M23 22l4 4" stroke="#42494f" strokeWidth="3" />
      </Icon>
    </button>
    <span className="h-[16px] flex items-center">
      <NavDot />
    </span>
    <button aria-label="动态观察">
      <Icon w={26} h={28}>
        <path d="M11 24V8H8l5-6 5 6h-3v16z" stroke="#42494f" strokeWidth="1.500" />
        <path d="M10 11C0 12 0 18 9 19M16 11c10 0 11 7 1 8h-8M12 16l-3 3 3 3" stroke="#42494f" strokeWidth="1.500" />
      </Icon>
    </button>
    <span className="h-[16px] flex items-center">
      <NavDot />
    </span>
    <button aria-label="播放动画">
      <Icon w={26} h={28}>
        <path d="M1 3h6v6H1zM10 3h6v6h-6zM19 3h6v6h-6zM1 13h17v13H1z" stroke="#42494f" strokeWidth="1.500" />
        <path d="M6 15l8 4-8 5z" fill="#42494f" />
      </Icon>
    </button>
    <span className="absolute right-0 bottom-[2px] w-[7px] h-[7px] rounded-full border border-[#43494f]" />
  </div>
)

const CommandLine = () => (
  <div className="absolute inset-x-[318px] bottom-0">
    <div className="pl-[64px] mb-[3px] flex flex-col items-start gap-1 text-sm leading-[18px] text-[#e8e8e8]">
      <p className="px-[2px] bg-[#53585c] text-[#babdbf] rounded-sm">
        正在恢复执行<span className="font-['DejaVu_Sans_Mono',monospace] text-xs"> LINE </span>命令。
      </p>
      {["a", "b"].map((key) => (
        <p key={key} className="px-[2px] bg-[#5f6264] rounded-sm">
          指定下一点或<span className="font-['DejaVu_Sans_Mono',monospace] text-xs"> [</span>放弃
          <span className="font-['DejaVu_Sans_Mono',monospace] text-xs">(U)]:</span>
        </p>
      ))}
    </div>
    <div className="h-[28px] flex border border-[#7d7f80] rounded-sm overflow-hidden">
      <div className="w-[57px] shrink-0 pl-1 flex items-center gap-[4px] bg-linear-to-b from-[#606060] to-[#444]">
        <Icon w={6} h={20}>
          <path d="M1 1v18M4 1v18" stroke="#aaa" strokeDasharray="2 1" />
        </Icon>
        <button aria-label="关闭命令行" className="w-[14px] flex justify-center">
          <Icon w={10} h={10}>
            <path d="M1 1l8 8M9 1L1 9" stroke="#dedede" strokeWidth="2" />
          </Icon>
        </button>
        <button aria-label="自定义" className="ml-1">
          <Icon w={16} h={16}>
            <path d="M6 6l8 8" stroke="#d0d0d0" strokeWidth="3" />
            <path d="M2 2l3 3M6 1a4 4 0 1 1-5 5" stroke="#d0d0d0" strokeWidth="2" />
          </Icon>
        </button>
      </div>
      <div className="flex-1 flex items-center pl-[5px] pr-1 bg-[#bcbec0]">
        <button aria-label="最近使用的命令" className="flex items-center gap-1">
          <Icon w={16} h={14}>
            <rect x="0.500" y="0.500" width="15" height="13" rx="1" fill="#a9b2bf" stroke="#7e8896" />
            <path d="M3 4l4 3-4 3M8 11h5" stroke="#3a4454" strokeWidth="1.500" />
          </Icon>
          <Icon w={6} h={4}>
            <path d="M0 0h6L3 4z" fill="#6a6a6a" />
          </Icon>
        </button>
        <input
          aria-label="命令"
          placeholder="键入命令"
          className="flex-1 ml-2 min-w-0 bg-transparent outline-none text-sm italic text-[#333] placeholder:text-[#808285]"
        />
        <button aria-label="展开历史">
          <Icon w={8} h={5}>
            <path d="M0 5h8L4 0z" fill="#222" />
          </Icon>
        </button>
      </div>
    </div>
  </div>
)

const DrawingArea = () => (
  <main className="relative flex-1 min-h-0 overflow-hidden bg-[#212932]">
    <GridLines />
    <p className="absolute left-0 top-1 text-[13px] leading-5 text-[#dfe1e3]">][俯视][二维线框]</p>
    <div className="absolute right-[6px] top-[10px] flex items-center gap-[10px]">
      <button aria-label="最小化视口">
        <Icon w={12} h={12}>
          <path d="M1 8h11" stroke="#e8e8e8" strokeWidth="3" />
        </Icon>
      </button>
      <button aria-label="还原视口">
        <Icon w={12} h={12}>
          <path d="M4 3V1h7v7H9" stroke="#e8e8e8" />
          <rect x="2" y="4" width="6" height="6" stroke="#e8e8e8" strokeWidth="2" />
        </Icon>
      </button>
      <button aria-label="关闭视口">
        <Icon w={10} h={12}>
          <path d="M1 2l8 8M9 2l-8 8" stroke="#e8e8e8" strokeWidth="2" />
        </Icon>
      </button>
    </div>
    <ViewCube />
    <NavigationBar />
    <aside className="absolute left-[778px] top-[34px] w-[304px] h-[152px] pt-4 pl-[58px] bg-[#86c0fe] text-white text-[23px] leading-10 font-bold">
      <p>小提示：</p>
      <p className="pl-7">绘制任意直线</p>
    </aside>
    <UcsIcon />
    <CommandLine />
  </main>
)

/* ---------- bottom bar ---------- */

const StatusGroup = ({ width, children }: { width: string; children: ReactNode }) => (
  <div className={`${width} h-full flex items-center justify-around bg-[#4f4f4f] border border-[#454545]`}>{children}</div>
)

const StatusBar = () => (
  <footer className="h-[19px] shrink-0 overflow-hidden flex items-start bg-[#383838]">
    <div className="h-[20px] pt-[2px] flex text-[#a9a9a9]">
      <button className={`${tabShape} w-[58px] -ml-2 bg-[#686868] text-[#f2f2f2] font-bold`}>模型</button>
      <button className={`${tabShape} w-[60px] -ml-[5px] bg-[#4c4c4c]`}>布局1</button>
      <button className={`${tabShape} w-[60px] -ml-[2px] bg-[#4c4c4c]`}>布局2</button>
      <button aria-label="新建布局" className="w-[24px] ml-1 flex items-center justify-center bg-[#4c4c4c] rounded-tl-xl">
        <Icon w={9} h={9}>
          <path d="M4.500 0v9M0 4.500h9" stroke="#ccc" strokeWidth="2" />
        </Icon>
      </button>
    </div>
    <div className="h-[28px] ml-auto pt-[2px] pl-[2px] flex gap-[3px] bg-[#707070] text-[#e6e6e6]">
      <StatusGroup width="w-[30px]">
        <button className="font-bold">模型</button>
      </StatusGroup>
      <StatusGroup width="w-[68px]">
        <Icon w={18} h={18}>
          <path d="M3 1v16M7 1v16M11 1v16M15 1v16M1 4h16M1 8h16M1 12h16M1 16h16" stroke="#2e86ee" strokeWidth="2" />
        </Icon>
        <Icon w={16} h={16}>
          <path d="M0 1h16M0 5h16M0 9h16M0 13h16" stroke="#b5b5b5" strokeDasharray="1 3" strokeWidth="1.500" />
        </Icon>
        <BigCaret />
      </StatusGroup>
      <StatusGroup width="w-[109px]">
        <Icon w={12} h={16}>
          <path d="M3 2v12h9M3 9h5v5" stroke="#c2c2c2" />
        </Icon>
        <Icon w={18} h={16}>
          <circle cx="9" cy="8" r="7" stroke="#c2c2c2" strokeWidth="1.500" />
          <path d="M9 9h8M9 9l6-6" stroke="#c2c2c2" strokeWidth="1.500" />
        </Icon>
        <BigCaret />
        <Icon w={18} h={20}>
          <path d="M1 1l16 16M9 0v10M9 18l0-4" stroke="#c2c2c2" strokeWidth="1.500" />
        </Icon>
        <BigCaret />
      </StatusGroup>
      <StatusGroup width="w-[68px]">
        <Icon w={14} h={14}>
          <path d="M1 13L13 3" stroke="#c2c2c2" />
          <rect x="5" y="7" width="4" height="4" fill="#c2c2c2" />
        </Icon>
        <Icon w={18} h={18}>
          <path d="M4 4h12v14M4 4v14" stroke="#d0d0d0" strokeWidth="1.500" />
          <rect x="1" y="2" width="5" height="5" fill="#1fd02c" stroke="#0a6b14" />
        </Icon>
        <BigCaret />
      </StatusGroup>
      <StatusGroup width="w-[113px]">
        <Icon w={16} h={20}>
          <path d="M7 2l3 6-2 1 3 5H1l4-5-2-1z" fill="#2e86ee" />
          <circle cx="11" cy="5" r="3" stroke="#2e86ee" strokeWidth="2" />
        </Icon>
        <Icon w={16} h={20}>
          <path d="M7 2l3 6-2 1 3 5H1l4-5-2-1zM12 1l-2 5h5l-3 5" fill="#bdbdbd" />
        </Icon>
        <Icon w={14} h={20}>
          <path d="M7 1l3 7-1 1 4 6H1l4-6-1-1z" fill="#bdbdbd" />
        </Icon>
        <button className="flex items-center gap-1 font-semibold">
          1:1
          <BigCaret />
        </button>
      </StatusGroup>
      <StatusGroup width="w-[41px]">
        <Icon w={14} h={14}>
          <path d="M7 0v14M0 7h14M2 2l10 10M12 2L2 12" stroke="#c8c8c8" strokeWidth="3" />
          <circle cx="7" cy="7" r="5" fill="#c8c8c8" />
          <circle cx="7" cy="7" r="2" fill="#4f4f4f" />
        </Icon>
        <BigCaret />
      </StatusGroup>
      <StatusGroup width="w-[24px]">
        <Icon w={16} h={16}>
          <path d="M8 0v16M0 8h16" stroke="#c8c8c8" strokeWidth="2" />
        </Icon>
      </StatusGroup>
      <StatusGroup width="w-[27px]">
        <Icon>
          <rect x="1" y="1" width="8" height="8" stroke="#c8c8c8" strokeWidth="1.500" />
          <circle cx="13" cy="8" r="3" stroke="#c8c8c8" strokeWidth="1.500" />
          <path d="M5 9v5h6" stroke="#c8c8c8" />
        </Icon>
      </StatusGroup>
      <StatusGroup width="w-[26px]">
        <Icon w={20} h={20}>
          <circle cx="10" cy="10" r="10" fill="#0f62ac" />
          <path d="M5 12l3 3 7-7" stroke="#3fa0ff" strokeWidth="2" />
        </Icon>
      </StatusGroup>
      <StatusGroup width="w-[36px]">
        <Icon>
          <rect x="1" y="1" width="16" height="14" stroke="#c8c8c8" strokeWidth="1.500" />
          <path d="M10 4h5v5M3 8v5h5M15 4l-5 5M3 13l4-4" stroke="#c8c8c8" strokeWidth="1.500" />
        </Icon>
        <Icon w={10} h={16}>
          <path d="M0 3h10M0 7h10M0 11h10" stroke="#c8c8c8" strokeWidth="1.500" />
        </Icon>
      </StatusGroup>
    </div>
  </footer>
)

/* ---------- overlays ---------- */

const AppMenuButton = () => (
  <button
    aria-label="应用程序菜单"
    className="absolute left-0 top-0 w-[28px] h-[31px] bg-linear-to-b from-[#8d8d8d] to-[#5f5f5f] border-r-2 border-b-2 border-[#2e2e2e]"
  >
    <Icon w={26} h={28}>
      <path d="M0 0h8l6 16-5 1-3-6-6 0z" fill="#c3282b" />
      <path d="M0 5l9 4v3L0 8z" fill="#8e1318" />
      <path d="M8 0l6 16h-2L5 0z" fill="#ec4a4a" />
      <path d="M17 6h7l-3 4z" fill="#222" />
    </Icon>
  </button>
)

const brandText = "[-webkit-text-stroke:6px_#2f2f2f] [paint-order:stroke_fill] [stroke-linejoin:round]"

const Watermark = () => (
  <div className="absolute left-[44px] top-[43px] h-[48px] flex items-center text-white text-[40px] leading-[48px] font-bold italic pointer-events-none">
    <span className={brandText}>秒</span>
    <span className={brandText}>d</span>
    <span className={`${brandText} ml-5`}>n</span>
    <span className={brandText}>g</span>
    <span className={brandText}>视频</span>
    <svg width="28" height="38" viewBox="0 0 28 38" fill="none" className="absolute left-[65px] top-1" aria-hidden="true">
      <circle cx="14" cy="25" r="11" fill="#2f86ec" stroke="#1f2f45" />
      <path d="M11 19l9 6-9 6z" fill="#fff" />
      <path d="M14 4l4 5 8-4" stroke="#222" strokeWidth="6" />
      <path d="M14 4l4 5 8-4" stroke="#f7e93a" strokeWidth="3" />
    </svg>
  </div>
)

const App = () => {
  return (
    <div className="relative h-screen overflow-hidden flex flex-col bg-[#383838] font-['Noto_Sans','Noto_Sans_CJK_SC',sans-serif] text-[13px] leading-[18px] text-[#e2e2e2]">
      <TitleBar />
      <RibbonTabs />
      <Ribbon />
      <DocumentTabs />
      <DrawingArea />
      <StatusBar />
      <AppMenuButton />
      <Watermark />
    </div>
  )
}

export default App
